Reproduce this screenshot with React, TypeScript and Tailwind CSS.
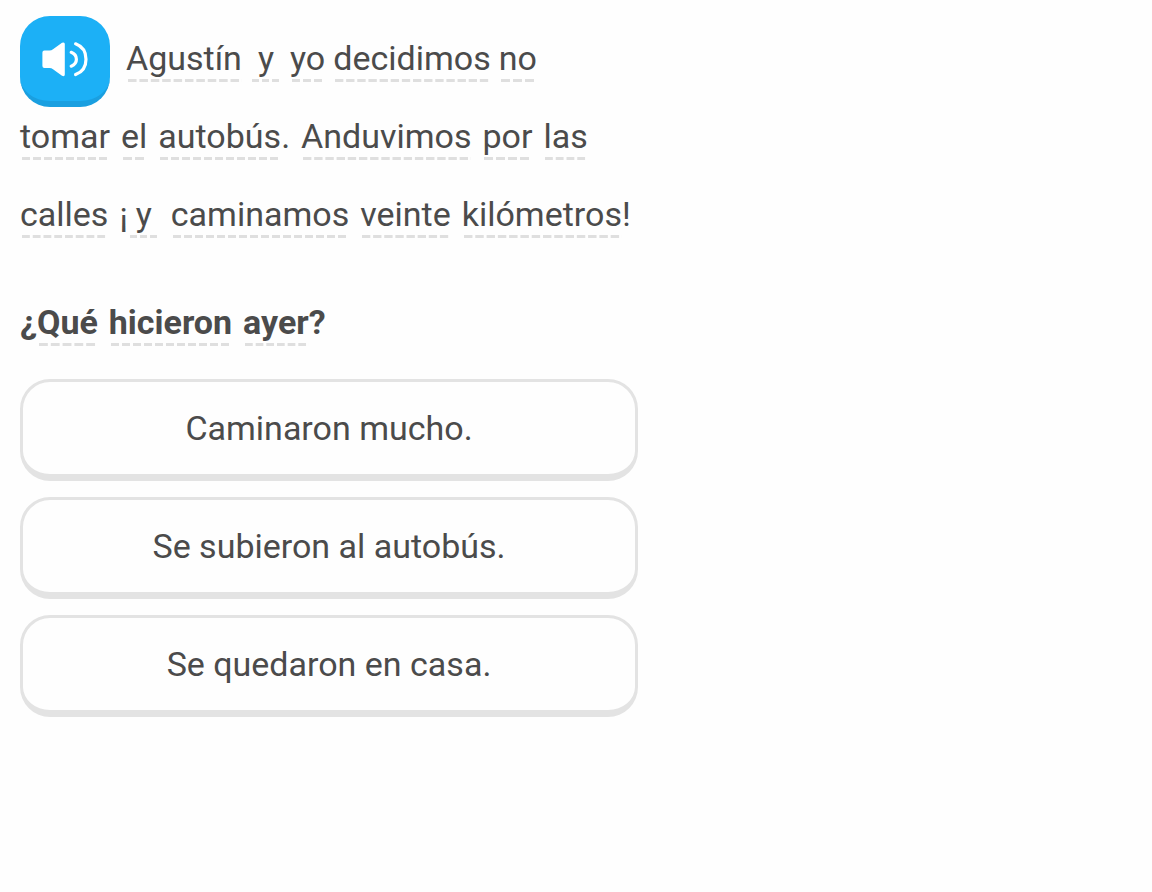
type Token = {
    text: string;
    before?: string;
    after?: string;
    wide?: boolean;
};

const story: Token[][] = [
    [{ text: 'Agustín' }, { text: 'y', wide: true }, { text: 'yo' }, { text: 'decidimos' }, { text: 'no' }],
    [
        { text: 'tomar' },
        { text: 'el' },
        { text: 'autobús', after: '.' },
        { text: 'Anduvimos' },
        { text: 'por' },
        { text: 'las' },
    ],
    [
        { text: 'calles' },
        { text: 'y', before: '¡', wide: true },
        { text: 'caminamos' },
        { text: 'veinte' },
        { text: 'kilómetros', after: '!' },
    ],
];

const question: Token[] = [{ text: 'Qué', before: '¿' }, { text: 'hicieron' }, { text: 'ayer', after: '?' }];

const options = ['Caminaron mucho.', 'Se subieron al autobús.', 'Se quedaron en casa.'];

const SpeakerIcon = () => (
    <svg viewBox="0 0 46 36" className="w-[46px] h-9" fill="none" aria-hidden="true">
        <path
            d="M2.4 9.5Q.4 9.5 .4 11.5V25Q.4 27 2.4 27H7.5Q9.5 27 11 28.2L20 34.8Q22.8 36 22.8 33.5V3Q22.8 .6 20 1.8L11 8.3Q9.5 9.5 7.5 9.5Z"
            fill="#fff"
        />
        <path d="M29.2 11.3Q34.4 13.4 34.4 18.3T29.2 25.2" stroke="#fff" strokeWidth="3.2" strokeLinecap="round" />
        <path d="M33.6 2.8C40.4 5.4 44 11 44 18.2S40.4 31 33.6 33.6" stroke="#fff" strokeWidth="3.2" strokeLinecap="round" />
    </svg>
);

const Word = ({ text, before, after, wide }: Token) => (
    <span className="flex">
        {before}
        <span className={wide ? 'relative px-2' : 'relative'}>
            {text}
            <span className="absolute left-0.5 right-0 bottom-[15px] h-[3px] bg-[linear-gradient(90deg,#dfdfdf_72%,transparent_72%)] bg-size-[11px_3px] bg-repeat-round" />
        </span>
        {after}
    </span>
);

const App = () => {
    return (
        <main className="min-h-screen bg-[#fefefe] font-[Roboto,sans-serif] text-[34px] text-[#4b4b4b]">
            <div className="max-w-[658px] px-5 pt-[19px]">
                <div className="leading-[78px]">
                    {story.map((line, i) => (
                        <div key={i} className={i === 0 ? 'flex h-[78px] gap-2' : 'flex h-[78px] gap-[11px]'}>
                            {i === 0 && (
                                <button
                                    type="button"
                                    aria-label="Escuchar"
                                    className="-mt-[3px] mr-2 flex h-[91px] w-[90px] shrink-0 items-center justify-center rounded-[30px] border-b-[6px] border-[#1a9fe0] bg-[#1cb0f6]"
                                >
                                    <SpeakerIcon />
                                </button>
                            )}
                            {line.map((token, j) => (
                                <Word key={j} {...token} />
                            ))}
                        </div>
                    ))}
                </div>

                <h2 className="mt-[30px] flex gap-[11px] font-bold leading-[78px]">
                    {question.map((token) => (
                        <Word key={token.text} {...token} />
                    ))}
                </h2>

                <div className="mt-[18px] flex flex-col gap-4">
                    {options.map((option) => (
                        <button
                            key={option}
                            type="button"
                            className="h-[102px] rounded-[30px] border-[3px] border-b-[7px] border-[#e3e3e3] text-center"
                        >
                            {option}
                        </button>
                    ))}
                </div>
            </div>
        </main>
    );
};

export default App;
